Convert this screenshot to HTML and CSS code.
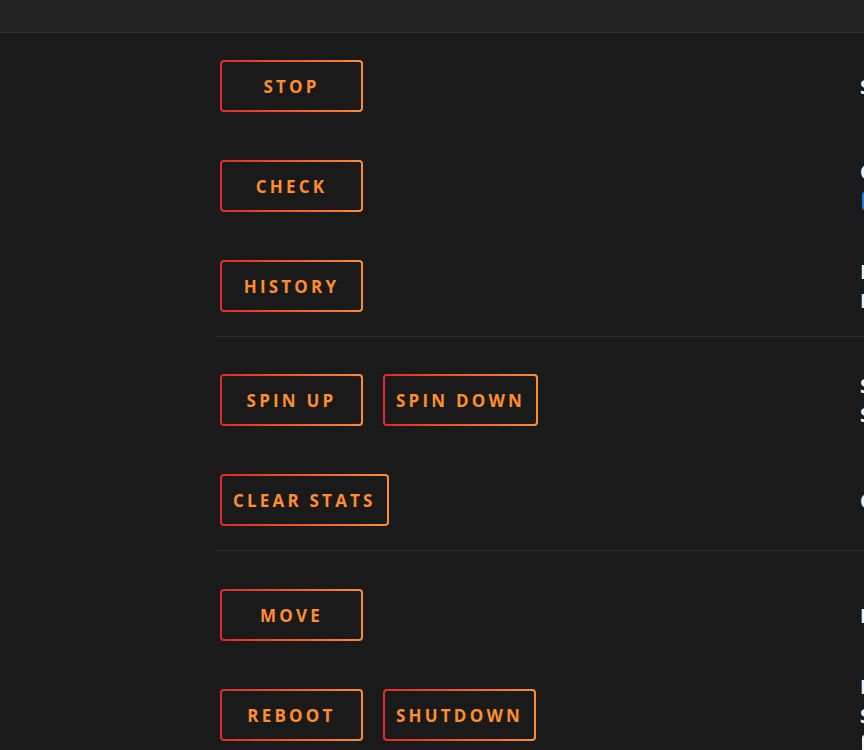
FILE: index.html
```html
<!DOCTYPE html>
<html lang="en">
<head>
<meta charset="utf-8">
<title>Array Operation</title>
<link rel="stylesheet" href="styles.css">
</head>
<body>
<header class="topbar"></header>
<main class="ops">
  <section class="group group-first">
    <div class="op-row">
      <div class="op-actions"><button class="btn">Stop</button></div>
      <div class="op-desc">
        <div class="line"><strong>Stop</strong> will take the array off-line.</div>
      </div>
    </div>
    <div class="op-row">
      <div class="op-actions"><button class="btn">Check</button></div>
      <div class="op-desc">
        <div class="line"><strong>Check</strong> will start <strong>Parity-Check</strong>.</div>
        <div class="line"><span class="checkbox"></span>Write corrections to parity</div>
      </div>
    </div>
    <div class="op-row">
      <div class="op-actions"><button class="btn">History</button></div>
      <div class="op-desc">
        <div class="line">Last check completed on <strong>Sunday, 01-06-2025, 00:37</strong></div>
        <div class="line">Finding <strong>0</strong> errors.</div>
      </div>
    </div>
  </section>
  <section class="group">
    <div class="op-row">
      <div class="op-actions"><button class="btn">Spin Up</button><button class="btn">Spin Down</button></div>
      <div class="op-desc">
        <div class="line"><strong>Spin Up</strong> will immediately spin up all disks.</div>
        <div class="line"><strong>Spin Down</strong> will immediately spin down all disks.</div>
      </div>
    </div>
    <div class="op-row">
      <div class="op-actions"><button class="btn">Clear Stats</button></div>
      <div class="op-desc">
        <div class="line"><strong>Clear Stats</strong> will immediately clear all disk statistics.</div>
      </div>
    </div>
  </section>
  <section class="group group-last">
    <div class="op-row">
      <div class="op-actions"><button class="btn">Move</button></div>
      <div class="op-desc">
        <div class="line"><strong>Move</strong> will immediately invoke the Mover.</div>
      </div>
    </div>
    <div class="op-row">
      <div class="op-actions"><button class="btn">Reboot</button><button class="btn">Shutdown</button></div>
      <div class="op-desc">
        <div class="line"><strong>Reboot</strong> will activate a clean system reset.</div>
        <div class="line"><strong>Shutdown</strong> will activate a clean system power down.</div>
        <div class="line"><span class="checkbox off"></span>Reboot in safe mode</div>
      </div>
    </div>
  </section>
</main>
</body>
</html>
```
FILE: styles.css
```css
html, body {
  margin: 0;
  padding: 0;
  background: #1a1a1a;
  overflow: hidden;
}

body {
  width: 864px;
  height: 750px;
  font-family: "Open Sans", "Noto Sans", sans-serif;
  color: #f2f2f2;
}

.topbar {
  height: 32px;
  background: #232323;
  border-bottom: 1px solid #2e2e2e;
}

.ops {
  margin-left: 216px;
}

.group {
  padding-top: 13px;
  border-bottom: 1px solid #2b2b2b;
}

.group-first {
  padding-top: 3px;
}

.group-last {
  padding-top: 14px;
}

/* every operation row: 52px button band with 24px above and below */
.op-row {
  display: grid;
  grid-template-columns: 644px 1fr;
  grid-template-rows: 52px;
  align-items: center;
  height: 52px;
  padding: 24px 0;
}

.op-actions {
  display: flex;
  gap: 20px;
  padding-left: 4px;
  height: 52px;
}

.btn {
  box-sizing: border-box;
  height: 52px;
  min-width: 143px;
  margin: 0;
  padding: 0 11px;
  border: 2px solid transparent;
  border-radius: 4px;
  background:
    linear-gradient(#1a1a1a, #1a1a1a) padding-box,
    linear-gradient(90deg, #e22828 0%, #ff8c2f 100%) border-box;
  color: #ff8c2f;
  font-family: "Open Sans", "Noto Sans", sans-serif;
  font-size: 17px;
  line-height: 1;
  font-weight: 700;
  letter-spacing: 3.2px;
  text-transform: uppercase;
  cursor: pointer;
}

.op-desc {
  white-space: nowrap;
  font-size: 20px;
  line-height: 29px;
  font-weight: 600;
}

.op-desc .line {
  display: flex;
  align-items: center;
  height: 29px;
}

.op-desc strong {
  font-weight: 700;
}

.checkbox {
  display: inline-block;
  width: 18px;
  height: 18px;
  margin-left: 2px;
  margin-right: 8px;
  border-radius: 3px;
  background: #1f7fe0;
}

.checkbox.off {
  background: transparent;
  box-shadow: inset 0 0 0 2px #f2f2f2;
}
```
